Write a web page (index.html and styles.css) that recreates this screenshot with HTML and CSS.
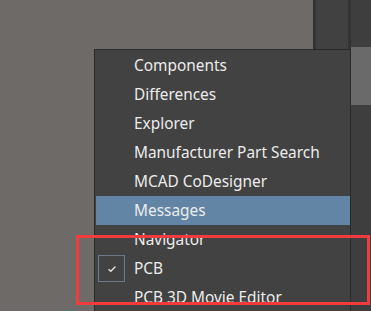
FILE: index.html
```html
<html>
<head>
    <meta charset="UTF-8">
    <title>Panels menu</title>
    <link rel="stylesheet" href="styles.css">
</head>
<body>
<div class="desk">
    <div class="canvas"></div>
    <div class="dock">
        <div class="dock-col"></div>
        <div class="dock-tabs">
            <div class="dock-tab"></div>
        </div>
    </div>

    <div class="menu">
        <div class="item">Components</div>
        <div class="item">Differences</div>
        <div class="item">Explorer</div>
        <div class="item">Manufacturer Part Search</div>
        <div class="item">MCAD CoDesigner</div>
        <div class="item active">Messages</div>
        <div class="item">Navigator</div>
        <div class="item checked">
            <span class="check">
                <svg width="10" height="8" viewBox="0 0 10 8"><path d="M1.5 4.2 L3.8 6.3 L8.5 1.5" fill="none" stroke="#e8e8e8" stroke-width="1.3"/></svg>
            </span>
            PCB
        </div>
        <div class="item">PCB 3D Movie Editor</div>
    </div>

    <div class="markup"></div>
</div>
</body>
</html>
```

FILE: styles.css
```css
body {
    margin: 0;
    padding: 0;
    background-color: #6e6a67;
    font-family: "Noto Sans", "Open Sans", sans-serif;
    overflow: hidden;
}

.desk {
    position: relative;
    display: flex;
    width: 371px;
    height: 311px;
}

.canvas {
    flex: 1;
}

.dock {
    display: flex;
    width: 58px;
    background-color: #333333;
}

.dock-col {
    width: 32px;
    margin-left: 3px;
    background-color: #414141;
}

.dock-tabs {
    flex: 1;
    margin-left: 3px;
    padding-top: 47px;
    background-color: #3e3e3e;
}

.dock-tab {
    height: 58px;
    background-color: #6a6a6a;
}

/* popup menu */
.menu {
    position: absolute;
    left: 94px;
    top: 49px;
    width: 255px;
    padding: 1px 0;
    background-color: #424242;
    border: 1px solid #2a2a2a;
    border-bottom: none;
}

.item {
    position: relative;
    height: 29px;
    line-height: 29px;
    margin-left: 1px;
    padding-left: 38px;
    color: #ececec;
    font-size: 15.4px;
    white-space: nowrap;
}

.item.active {
    background-color: #6285a6;
}

.check {
    position: absolute;
    left: 2px;
    top: 1px;
    width: 25px;
    height: 25px;
    border: 1px solid #6a7a8b;
    display: flex;
    align-items: center;
    justify-content: center;
}

/* red annotation box */
.markup {
    position: absolute;
    left: 76px;
    top: 235px;
    width: 288px;
    height: 64px;
    border: 3px solid #f03c3c;
}
```
